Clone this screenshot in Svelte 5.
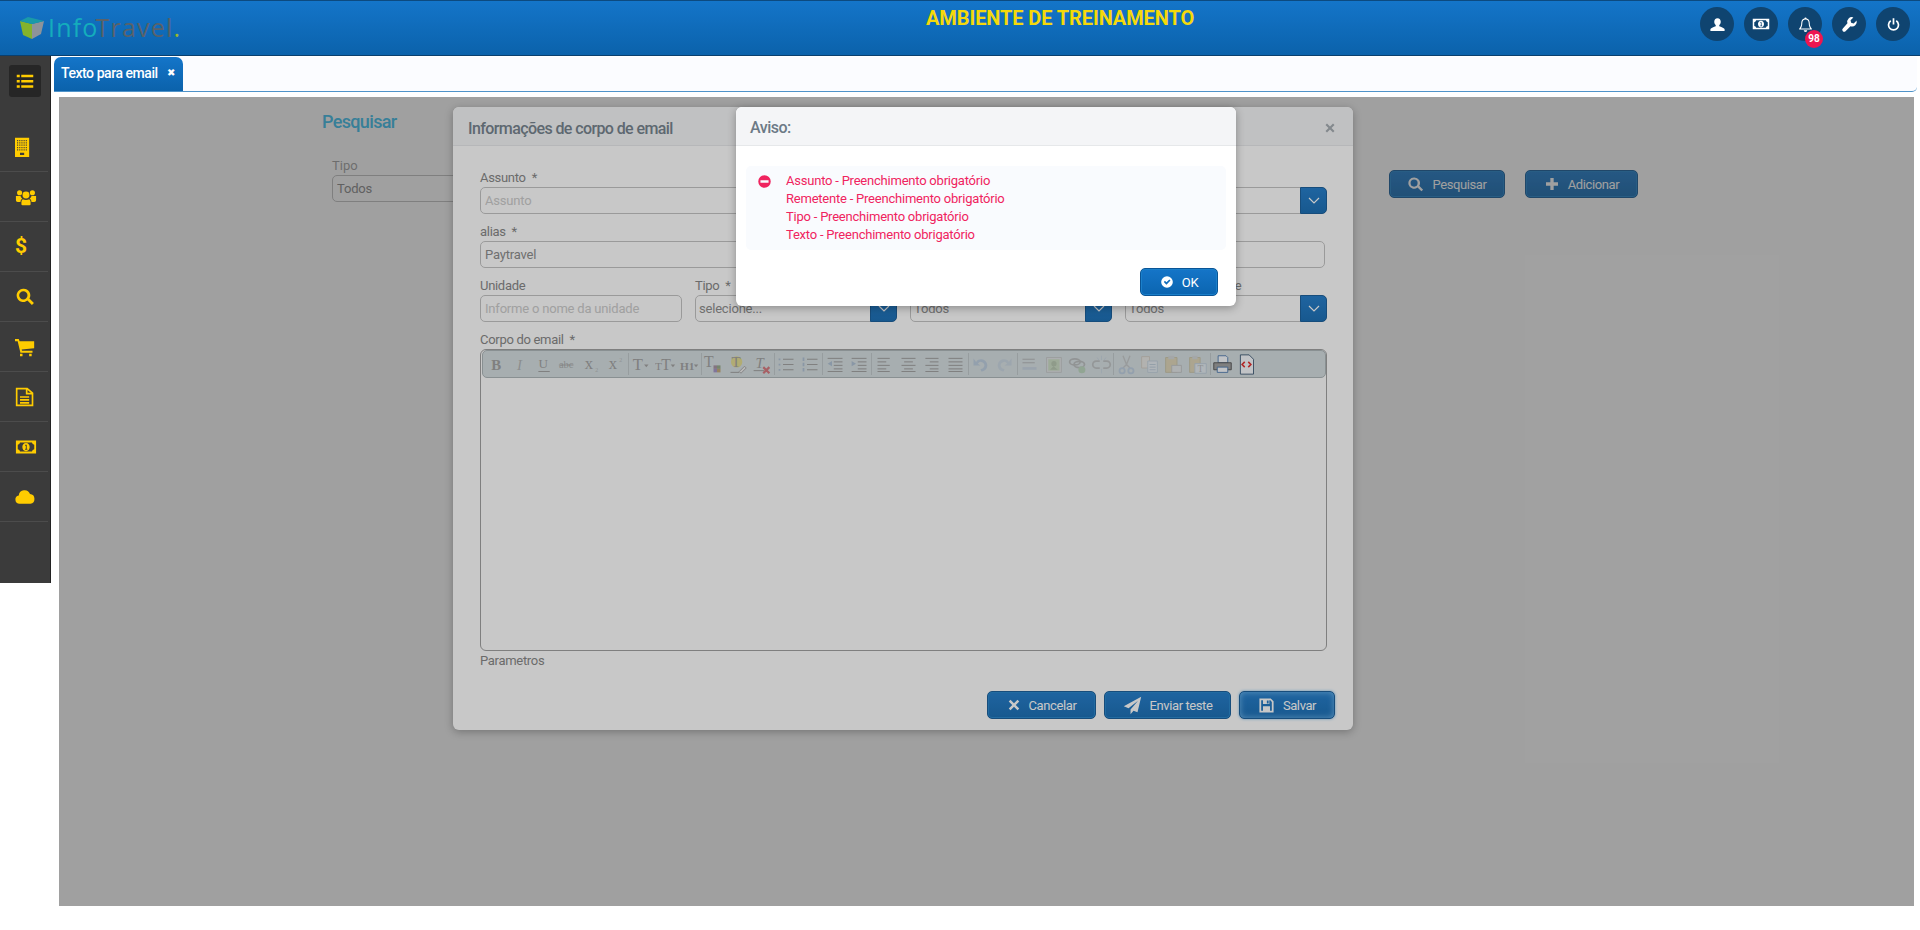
<script>
  const paths = {
    user: "M12 3c-3 0-4.6 2.3-4.6 5 0 2 .9 3.7 2.1 4.8v1.6c-2.5 1.2-6.5 1.8-7.5 4.1V21h20v-2.5c-1-2.3-5-2.9-7.500-4.100v-1.600c1.200-1.100 2.100-2.800 2.100-4.800 0-2.700-1.600-5-4.600-5z",
    money: "M1 5h22v14H1z M5.500 7a3 3 0 0 1-2.500 2.500v5A3 3 0 0 1 5.500 17h13a3 3 0 0 1 2.500-2.500v-5A3 3 0 0 1 18.500 7z M12 7.500c2.500 0 4 2 4 4.500s-1.500 4.500-4 4.500-4-2-4-4.500 1.500-4.500 4-4.500z M11 9.500v1h.8v3.500H11v1h2.500v-1h-.7V9.500z",
    bell: "M12 2a1.500 1.500 0 0 0-1.500 1.600C7.500 4.300 6 6.800 6 10c0 4-1.200 6-3 8v1h18v-1c-1.800-2-3-4-3-8 0-3.200-1.500-5.700-4.500-6.400A1.500 1.500 0 0 0 12 2z M12 5c3 0 4.500 2.200 4.500 5 0 3.200.8 5.700 2 7.500h-13c1.200-1.800 2-4.300 2-7.500 0-2.800 1.500-5 4.500-5z M9.500 20a2.500 2.500 0 0 0 5 0z",
    wrench: "M22 6.500l-4 4-3.700-.8-.8-3.700 4-4a6.500 6.500 0 0 0-8.400 8.100L2.600 17.600a2.600 2.600 0 0 0 3.800 3.800l7-7A6.500 6.500 0 0 0 22 6.500z",
    power: "M10.800 3h2.400v9h-2.400z M7.500 5.800l1.300 2a5.800 5.800 0 1 0 6.400 0l1.300-2a8.200 8.200 0 1 1-9 0z",
    search: "M10 2a8 8 0 1 0 4.900 14.300l5.400 5.400 2.400-2.400-5.400-5.400A8 8 0 0 0 10 2z M10 5a5 5 0 1 1 0 10 5 5 0 1 1 0-10z",
    plus: "M9.500 3h5v6.500H21v5h-6.500V21h-5v-6.500H3v-5h6.500z",
    times: "M6 3l6 6 6-6 3 3-6 6 6 6-3 3-6-6-6 6-3-3 6-6-6-6z",
    plane: "M23 1L1 13l6 2.500L19 6 9.500 17v6l3.800-4.500 5 2z",
    save: "M2 2h16l4 4v16H2z M4.500 4.500v15h15V7l-2-2.500H16V10H7V4.500z M12.500 5H15v4h-2.500z M7 13h10v6.500H7z",
    check: "M12 2a10 10 0 1 0 0 20 10 10 0 0 0 0-20z M6.500 12l2-2 2.500 2.500 5-5 2 2-7 7z",
    minus: "M12 2a10 10 0 1 0 0 20 10 10 0 0 0 0-20z M5.500 10h13v4h-13z",
    list: "M1 3.500h4v3.500H1z M7 3.500h16v3.500H7z M1 10.500h4v3.500H1z M7 10.500h16v3.500H7z M1 17.500h4v3.500H1z M7 17.500h16v3.500H7z",
    users: "M5 4.500a2.800 2.800 0 1 1 0 5.600 2.800 2.800 0 0 1 0-5.600z M19 4.500a2.800 2.800 0 1 1 0 5.600 2.800 2.800 0 0 1 0-5.600z M12 6a3.800 3.800 0 1 1 0 7.600A3.800 3.800 0 0 1 12 6z M1 11h5c.6 1.500 1.300 2.300 2 3-1.300.8-2 2-2 3.500H3c-1.200 0-2-1-2-2.200z M23 11h-5c-.6 1.500-1.300 2.300-2 3 1.300.8 2 2 2 3.500h3c1.200 0 2-1 2-2.200z M8.500 14.500c1.800 1 5.200 1 7 0 1 .8 1.500 1.800 1.500 3V20c0 .6-.5 1-1 1H8c-.5 0-1-.4-1-1v-2.500c0-1.200.5-2.200 1.500-3z",
    cart: "M0 2.500h4.500L5.500 5H23v8.500L8 15l.4 1.500H21V19H6.500L3.200 5H0z M6 20h3v3H6z M17 20h3v3h-3z",
    doc: "M1 1h14l7 6v16H1z M3 3v18h17V9h-7V3z M15 3.500V7h4z M6 11h11v2H6z M6 14.500h11v2H6z M6 18h11v2H6z",
    cloud: "M5.500 20a5 5 0 0 1-1-9.900A7 7 0 0 1 18 8.500 5.800 5.800 0 0 1 18.500 20z"
  };

  // little windows of the building icon
  let building = "M0 1h17v23H0z";
  for (let r = 0; r < 5; r++) {
    for (let c = 0; c < 5; c++) {
      building += ` M${2.5 + c * 2.6} ${3.5 + r * 2.8}h1.300v1.500h-1.300z`;
    }
  }
  building += " M6 19h5v2.500H6z";
  paths.building = building;

  const sideItems = ["building", "users", "$", "search", "cart", "doc", "money", "cloud"];
  const topItems = ["user", "money", "bell", "wrench", "power"];
  const errors = [
    "Assunto - Preenchimento obrigatório",
    "Remetente - Preenchimento obrigatório",
    "Tipo - Preenchimento obrigatório",
    "Texto - Preenchimento obrigatório"
  ];

  const grey = "#9b9b9b";
  const soft = "#a8bcd0";
  const txt = (s, x, y, size, extra = "") =>
    `<text x="${x}" y="${y}" font-size="${size}" font-family="Liberation Serif, serif" fill="${grey}" ${extra}>${s}</text>`;
  const lines = (rows, color = grey) =>
    rows.map(([x1, x2, y]) => `<path d="M${x1} ${y}H${x2}" stroke="${color}" stroke-width="1.200"/>`).join("");
  const caret = (x, y) => `<path d="M${x} ${y}h5l-2.500 3z" fill="${grey}"/>`;
  const even = (x1, x2) => [5, 9, 13, 17].map((y) => [x1, x2, y]);

  const toolbar = [
    [
      txt("B", 6, 18, 17, 'font-weight="bold"'),
      txt("I", 8, 18, 17, 'font-style="italic" fill-opacity=".7"'),
      txt("U", 5, 16, 15) + lines([[5, 18, 20]]),
      txt("abc", 1, 16, 12, 'text-decoration="line-through" fill-opacity=".8"'),
      txt("x", 3, 17, 19) + txt("2", 15, 21, 7, 'fill-opacity=".6"'),
      txt("x", 3, 17, 19) + txt("2", 15, 9, 7, 'fill-opacity=".6"')
    ],
    [
      txt("T", 2, 18, 19) + caret(15, 12),
      txt("T", 0, 18, 13) + txt("T", 7, 18, 18) + caret(18, 12),
      txt("H1", 1, 18, 13, 'font-weight="bold"') + caret(17, 12)
    ],
    [
      txt("T", 1, 15, 18) +
        '<path d="M12 13h4v4h-4z" fill="#a08c9c"/><path d="M16 13h4v4h-4z" fill="#8ea482"/><path d="M12 17h4v4h-4z" fill="#9c8cc0"/><path d="M16 17h4v4h-4z" fill="#bca070"/>',
      '<circle cx="11" cy="9" r="6.500" fill="#dfd88a"/>' + txt("T", 5, 15, 17) + '<path d="M14 20l6-6 2 2-6 6z" fill="#e8e8e8" stroke="#999"/>' + lines([[4, 14, 21]]),
      txt("T", 5, 16, 17, 'font-style="italic"') + lines([[3, 15, 19]]) + '<path d="M14 15l7 7M21 15l-7 7" stroke="#d27076" stroke-width="2.500"/>'
    ],
    [
      '<path d="M3 5h2v2H3zM3 11h2v2H3zM3 17h2v2H3z" fill="' + soft + '"/>' + lines([[8, 20, 6], [8, 20, 12], [8, 20, 18]]),
      '<path d="M3 4h2v4H3zM3 10h2v4H3zM3 16h2v4H3z" fill="' + soft + '"/>' + lines([[8, 20, 6], [8, 20, 12], [8, 20, 18]])
    ],
    [
      lines([[3, 20, 5], [10, 20, 9], [10, 20, 13], [10, 20, 17], [3, 20, 20]]) + '<path d="M3 11l5-3v6z" fill="' + soft + '"/>',
      lines([[3, 20, 5], [10, 20, 9], [10, 20, 13], [10, 20, 17], [3, 20, 20]]) + '<path d="M8 11l-5-3v6z" fill="' + soft + '"/>'
    ],
    [
      lines([[4, 18, 5], [4, 14, 9], [4, 18, 13], [4, 14, 17], [4, 18, 20]]),
      lines([[4, 20, 5], [7, 17, 9], [4, 20, 13], [7, 17, 17], [4, 20, 20]]),
      lines([[5, 20, 5], [10, 20, 9], [5, 20, 13], [10, 20, 17], [5, 20, 20]]),
      lines([...even(4, 20), [4, 20, 20]])
    ],
    [
      '<path d="M7 9a7 7 0 1 1 6 11l-1-3a4 4 0 1 0-3-6l3 2H4V5z" fill="#a5bcd8"/>',
      '<path d="M17 9a7 7 0 1 0-6 11l1-3a4 4 0 1 1 3-6l-3 2h8V5z" fill="#b9c9dc"/>'
    ],
    [
      lines([[4, 18, 6], [4, 18, 10]]) + '<path d="M4 15h16v3H4z" fill="#b4c4d8"/>',
      '<path d="M4 4h17v17H4z" fill="#dedede" stroke="#b4b4b4"/><path d="M6 6h13v13H6z" fill="#bcd4a8"/><path d="M12.500 8a3 3 0 1 1 0 6 3 3 0 0 1 0-6zM8 18l4-4 5 4z" fill="#9ab088"/>',
      '<ellipse cx="9" cy="9" rx="6" ry="3.500" fill="none" stroke="#a0a0a0" stroke-width="2"/><ellipse cx="14" cy="12" rx="6" ry="3.500" fill="none" stroke="#a0a0a0" stroke-width="2"/><circle cx="17" cy="18" r="4" fill="#a0c89c"/>',
      '<path d="M10 8H6a4 4 0 0 0 0 8h4M14 8h4a4 4 0 0 1 0 8h-4" fill="none" stroke="#a8a8a8" stroke-width="2"/><path d="M12 2v5M12 17v5M7 4l2 3M17 4l-2 3" stroke="#b8c8dc"/>'
    ],
    [
      '<path d="M8 2l4 10 4-10M12 12l-4 4M12 12l4 4" fill="none" stroke="#b0b0b0" stroke-width="1.500"/><circle cx="7" cy="19" r="3" fill="none" stroke="#a5bcd8" stroke-width="2"/><circle cx="17" cy="19" r="3" fill="none" stroke="#a5bcd8" stroke-width="2"/>',
      '<path d="M3 3h9v13H3z" fill="#ece6de" stroke="#c8b8a8"/><path d="M10 8h11v13H10z" fill="#e6ecf4" stroke="#a8bcd0"/>' + lines([[12, 19, 12], [12, 19, 15], [12, 19, 18]], "#a8bcd0"),
      '<path d="M3 4h13v17H3z" fill="#dcc894" stroke="#b8a878"/><path d="M6 2h7v4H6z" fill="#ccc"/><path d="M10 13h11v8H10z" fill="#e4e4e4" stroke="#a8a8a8"/>',
      '<path d="M3 4h12v17H3z" fill="#dcc894" stroke="#b8a878"/><path d="M6 2h6v4H6z" fill="#ccc"/><path d="M9 11h13v11H9z" fill="#e6ecf4" stroke="#a8bcd0"/>' + txt("T", 12, 21, 11)
    ],
    [
      '<path d="M7 2h9l2 2v6H7z" fill="#f6f8fc" stroke="#3f6fa8"/><path d="M2 10h20v8H2z" fill="#9a9a9a" stroke="#444"/><path d="M6 15h12v6H6z" fill="#f6f8fc" stroke="#3f6fa8"/>',
      '<path d="M5 1h10l5 5v17H5z" fill="#f6f8fc" stroke="#2c4a68"/><path d="M10 9l-3 3 3 3M14 9l3 3-3 3" fill="none" stroke="#e02020" stroke-width="1.800"/>'
    ]
  ];
</script>

{#snippet icon(name, size)}
  <svg class="ic" width={size} height={size} viewBox="0 0 24 24" aria-hidden="true">
    <path fill="currentColor" fill-rule="evenodd" d={paths[name]} />
  </svg>
{/snippet}

{#snippet picker(value)}
  <div class="select">
    <span class="value">{value}</span>
    <span class="arrow">
      <svg width="12" height="7" viewBox="0 0 12 7"><path d="M1 1l5 5 5-5" fill="none" stroke="#fff" stroke-width="1.200" /></svg>
    </span>
  </div>
{/snippet}

<header class="topbar">
  <div class="logo">
    <svg width="24" height="24" viewBox="0 0 24 24">
      <path d="M0 6l12 3v15L3 20z" fill="#84b32c" />
      <path d="M12 9l12-3-3 13-9 5z" fill="#8d939a" />
      <path d="M0 6l8-4 16 4-12 3z" fill="#1a9aa8" />
    </svg>
    <span class="brand"><span class="info">Info</span><span class="travel">Travel</span><span class="dot">.</span></span>
  </div>
  <h1>AMBIENTE DE TREINAMENTO</h1>
  <nav class="actions">
    {#each topItems as item}
      <span class="round">
        {@render icon(item, item === "money" ? 18 : 17)}
        {#if item === "bell"}<b class="badge">98</b>{/if}
      </span>
    {/each}
  </nav>
</header>

<div class="shell">
  <aside class="sidebar">
    <div class="menu">{@render icon("list", 18)}</div>
    <ul>
      {#each sideItems as item}
        <li>
          {#if item === "$"}
            <span class="dollar">$</span>
          {:else}
            {@render icon(item, item === "users" || item === "money" ? 22 : 20)}
          {/if}
        </li>
      {/each}
    </ul>
  </aside>

  <main>
    <div class="tabs">
      <div class="tab">Texto para email <span class="close">✖</span></div>
    </div>

    <section class="panel">
      <h2>Pesquisar</h2>
      <div class="filters">
        <div class="filter-field">
          <label for="f-tipo">Tipo</label>
          <input id="f-tipo" value="Todos" readonly />
        </div>
        <button class="btn search-btn">{@render icon("search", 17)} Pesquisar</button>
        <button class="btn add-btn">{@render icon("plus", 16)} Adicionar</button>
      </div>

      <div class="backdrop"></div>

      <div class="modal">
        <div class="modal-head">
          <h3>Informações de corpo de email</h3>
          <span class="modal-x">{@render icon("times", 12)}</span>
        </div>
        <div class="modal-body">
          <div class="row two">
            <div class="field">
              <label for="assunto">Assunto <em>*</em></label>
              <input id="assunto" placeholder="Assunto" />
            </div>
            <div class="field">
              <span class="lbl"></span>
              {@render picker("")}
            </div>
          </div>
          <div class="row two">
            <div class="field">
              <label for="alias">alias <em>*</em></label>
              <input id="alias" value="Paytravel" readonly />
            </div>
            <div class="field narrow">
              <span class="lbl"></span>
              <input aria-label="resposta" />
            </div>
          </div>
          <div class="row four">
            <div class="field">
              <label for="unidade">Unidade</label>
              <input id="unidade" placeholder="Informe o nome da unidade" />
            </div>
            <div class="field">
              <span class="lbl">Tipo <em>*</em></span>
              {@render picker("selecione...")}
            </div>
            <div class="field">
              <span class="lbl"></span>
              {@render picker("Todos")}
            </div>
            <div class="field">
              <span class="lbl last">Categoria do cliente</span>
              {@render picker("Todos")}
            </div>
          </div>

          <div class="lbl corpo">Corpo do email <em>*</em></div>
          <div class="editor">
            <div class="toolbar">
              {#each toolbar as group, g}
                {#if g > 0}<i class="sep"></i>{/if}
                {#each group as tool}
                  <span class="tool" class:muted={g >= 6 && g <= 8}><svg width="21" height="21" viewBox="0 0 24 24">{@html tool}</svg></span>
                {/each}
              {/each}
            </div>
          </div>
          <div class="lbl params">Parametros</div>
        </div>
        <div class="modal-foot">
          <button class="btn">{@render icon("times", 14)} Cancelar</button>
          <button class="btn">{@render icon("plane", 19)} Enviar teste</button>
          <button class="btn focus">{@render icon("save", 17)} Salvar</button>
        </div>
      </div>

      <div class="backdrop"></div>

      <div class="dialog">
        <div class="dialog-head">Aviso:</div>
        <div class="alert">
          <span class="alert-ic">{@render icon("minus", 15)}</span>
          <div>
            {#each errors as line}
              <div>{line}</div>
            {/each}
          </div>
        </div>
        <div class="dialog-foot">
          <button class="btn ok">{@render icon("check", 14)} OK</button>
        </div>
      </div>
    </section>
  </main>
</div>

<style>
  :global(body) {
    background: #fff;
    font-family: Roboto, "Noto Sans", sans-serif;
    font-size: 13px;
  }
  .ic {
    display: block;
    flex: none;
  }
  .topbar {
    height: 56px;
    box-sizing: border-box;
    display: flex;
    align-items: flex-start;
    background: linear-gradient(#1475c9, #0b62ab);
    border-top: 1px solid #0c4a80;
    border-bottom: 1px solid #0a3f6e;
  }
  .logo {
    width: 926px;
    box-sizing: border-box;
    flex: none;
    display: flex;
    align-items: center;
    gap: 4px;
    padding: 13px 0 0 20px;
  }
  .brand {
    font-family: "Open Sans", sans-serif;
    font-weight: 400;
    font-size: 25px;
    line-height: 26px;
    letter-spacing: 1.2px;
  }
  .info {
    color: #14adbc;
  }
  .travel {
    color: #59626a;
    margin-left: -3px;
  }
  .dot {
    color: #9ab52c;
  }
  h1 {
    margin: 5px 0 0;
    color: #f5d90a;
    font-size: 20px;
    line-height: 24px;
    font-weight: 700;
    letter-spacing: -0.1px;
  }
  .actions {
    margin-left: auto;
    display: flex;
    gap: 10px;
    padding: 6px 10px 0 0;
  }
  .round {
    position: relative;
    width: 34px;
    height: 34px;
    border-radius: 50%;
    background: #0f4470;
    color: #fff;
    display: flex;
    align-items: center;
    justify-content: center;
  }
  .badge {
    position: absolute;
    left: 17px;
    top: 23px;
    width: 18px;
    height: 18px;
    line-height: 18px;
    border-radius: 50%;
    background: #ee1650;
    color: #fff;
    font-size: 10px;
    text-align: center;
  }
  .shell {
    display: flex;
    align-items: flex-start;
  }
  .sidebar {
    width: 51px;
    height: 527px;
    flex: none;
    box-sizing: border-box;
    background: #3b3b3b;
    border-right: 1px solid #222;
    color: #ffcc00;
  }
  .menu {
    width: 32px;
    height: 32px;
    margin: 9px 0 0 9px;
    border-radius: 3px;
    background: #262626;
    display: flex;
    align-items: center;
    justify-content: center;
  }
  .sidebar ul {
    list-style: none;
    margin: 0;
    padding: 25px 0 0;
  }
  .sidebar li {
    width: 48px;
    height: 50px;
    box-sizing: border-box;
    border-bottom: 1px solid #4c4c4c;
    display: flex;
    align-items: center;
    padding-left: 15px;
  }
  .dollar {
    font-size: 21px;
    font-weight: 700;
    line-height: 21px;
  }
  main {
    flex: 1;
    min-width: 0;
  }
  .tabs {
    margin: 1px 3px 0 3px;
    height: 35px;
    box-sizing: border-box;
    background: #fbfcff;
    border-bottom: 1px solid #4f93c9;
    border-bottom-right-radius: 5px;
  }
  .tab {
    width: 129px;
    height: 34px;
    box-sizing: border-box;
    padding-left: 7px;
    border-radius: 7px 7px 0 0;
    background: linear-gradient(#1475c9, #0b62ab);
    color: #fff;
    font-size: 14px;
    font-weight: 500;
    line-height: 32px;
    letter-spacing: -0.45px;
    white-space: nowrap;
  }
  .close {
    font-size: 10px;
    margin-left: 6px;
    vertical-align: 2px;
  }
  .panel {
    position: relative;
    margin: 5px 6px 0 8px;
    height: 809px;
    background: #fff;
    overflow: hidden;
  }
  h2 {
    margin: 0;
    padding: 14px 0 0 263px;
    font-size: 18px;
    line-height: 22px;
    font-weight: 500;
    color: #35c0f0;
    letter-spacing: -0.65px;
  }
  .filters {
    display: flex;
    align-items: flex-end;
    padding: 24px 0 0 273px;
  }
  .filter-field {
    width: 1000px;
    margin-right: 57px;
  }
  .filter-field label {
    display: block;
    line-height: 18px;
    color: #9f9f9f;
  }
  input {
    display: block;
    width: 100%;
    height: 27px;
    box-sizing: border-box;
    padding: 0 4px;
    border: 1px solid #c0c0c0;
    border-radius: 5px;
    background: transparent;
    font: inherit;
    letter-spacing: -0.2px;
    color: #858585;
    outline: none;
  }
  input::placeholder {
    color: #c8c8c8;
    opacity: 1;
  }
  .btn {
    display: inline-flex;
    align-items: center;
    justify-content: center;
    gap: 8px;
    height: 28px;
    box-sizing: border-box;
    border: 1px solid #0a5596;
    border-radius: 5px;
    background: linear-gradient(#1575c8, #0b65b0);
    box-shadow: inset 0 0 0 1px #1a7fca;
    color: #fff;
    font: inherit;
    letter-spacing: -0.4px;
    padding: 0;
  }
  .search-btn {
    width: 116px;
    margin-right: 20px;
    margin-bottom: 4px;
  }
  .add-btn {
    width: 113px;
    margin-bottom: 4px;
  }
  .backdrop {
    position: absolute;
    inset: 0;
    background: rgba(58, 58, 58, 0.28);
  }
  .modal {
    position: absolute;
    left: 394px;
    top: 10px;
    width: 900px;
    height: 623px;
    border-radius: 6px;
    background: #fff;
    box-shadow: 0 2px 8px rgba(0, 0, 0, 0.3);
    overflow: hidden;
  }
  .modal-head {
    height: 39px;
    box-sizing: border-box;
    display: flex;
    align-items: center;
    justify-content: space-between;
    padding: 4px 17px 0 15px;
    background: #f4f5f7;
    border-bottom: 1px solid #e6e8ea;
  }
  h3 {
    margin: 0;
    font-size: 16px;
    font-weight: 500;
    color: #6c7a86;
    letter-spacing: -0.6px;
  }
  .modal-x {
    color: #a0a8ae;
  }
  .modal-body {
    padding: 23px 26px 0 27px;
  }
  .row {
    display: grid;
    gap: 13px;
    margin-bottom: 9px;
  }
  .two {
    grid-template-columns: 1fr 1fr;
  }
  .four {
    grid-template-columns: repeat(4, 1fr);
  }
  .narrow {
    margin-right: 2px;
  }
  .field label,
  .lbl {
    display: block;
    min-height: 18px;
    line-height: 18px;
    color: #7e7e7e;
    letter-spacing: -0.3px;
    white-space: nowrap;
  }
  .lbl.last {
    letter-spacing: 0.05px;
  }
  .lbl em,
  .field label em {
    font-style: normal;
    margin-left: 3px;
  }
  .select {
    display: flex;
    height: 27px;
    box-sizing: border-box;
    border: 1px solid #c0c0c0;
    border-radius: 5px;
    color: #858585;
    letter-spacing: -0.2px;
  }
  .value {
    flex: 1;
    padding-left: 3px;
    line-height: 25px;
  }
  .arrow {
    width: 27px;
    margin: -1px;
    border: 1px solid #0a5596;
    border-radius: 0 5px 5px 0;
    background: linear-gradient(#1575c8, #0b65b0);
    box-sizing: border-box;
    display: flex;
    align-items: center;
    justify-content: center;
  }
  .editor {
    height: 302px;
    box-sizing: border-box;
    border: 1px solid #9a9a9a;
    border-radius: 6px;
    padding: 0 0 0 1px;
  }
  .toolbar {
    height: 28px;
    box-sizing: border-box;
    display: flex;
    align-items: center;
    padding-left: 2px;
    background: #d2dbde;
    border-radius: 5px;
    border: 1px solid #a8b2b5;
  }
  .tool {
    width: 23.9px;
    flex: none;
    display: flex;
    justify-content: center;
  }
  .muted {
    opacity: 0.6;
  }
  .sep {
    width: 1px;
    height: 22px;
    background: #bcc4c6;
    flex: none;
  }
  .params {
    margin-top: 1px;
  }
  .modal-foot {
    position: absolute;
    right: 18px;
    bottom: 11px;
    display: flex;
    gap: 8px;
  }
  .modal-foot .btn:nth-child(1) {
    width: 109px;
  }
  .modal-foot .btn:nth-child(2) {
    width: 127px;
  }
  .modal-foot .btn:nth-child(3) {
    width: 96px;
  }
  .focus {
    box-shadow: inset 0 0 6px #6bb6ee, 0 0 3px #6bb6ee;
  }
  .dialog {
    position: absolute;
    left: 677px;
    top: 10px;
    width: 500px;
    height: 199px;
    border-radius: 6px;
    background: #fff;
    box-shadow: 0 2px 8px rgba(0, 0, 0, 0.3);
    overflow: hidden;
  }
  .dialog-head {
    height: 39px;
    box-sizing: border-box;
    padding: 3px 0 0 14px;
    line-height: 36px;
    font-size: 16px;
    font-weight: 500;
    color: #6c7a86;
    background: #f4f5f7;
    border-bottom: 1px solid #e6e8ea;
    letter-spacing: -0.5px;
  }
  .alert {
    display: flex;
    margin: 20px 10px 0;
    padding: 6px 0 6px 11px;
    gap: 14px;
    height: 84px;
    box-sizing: border-box;
    border-radius: 5px;
    background: #f9fbfe;
    color: #f0245f;
    line-height: 18px;
    letter-spacing: -0.22px;
  }
  .alert-ic {
    padding-top: 2px;
  }
  .dialog-foot {
    display: flex;
    justify-content: flex-end;
    padding: 18px 18px 0 0;
  }
  .ok {
    width: 78px;
    height: 28px;
  }
</style>
